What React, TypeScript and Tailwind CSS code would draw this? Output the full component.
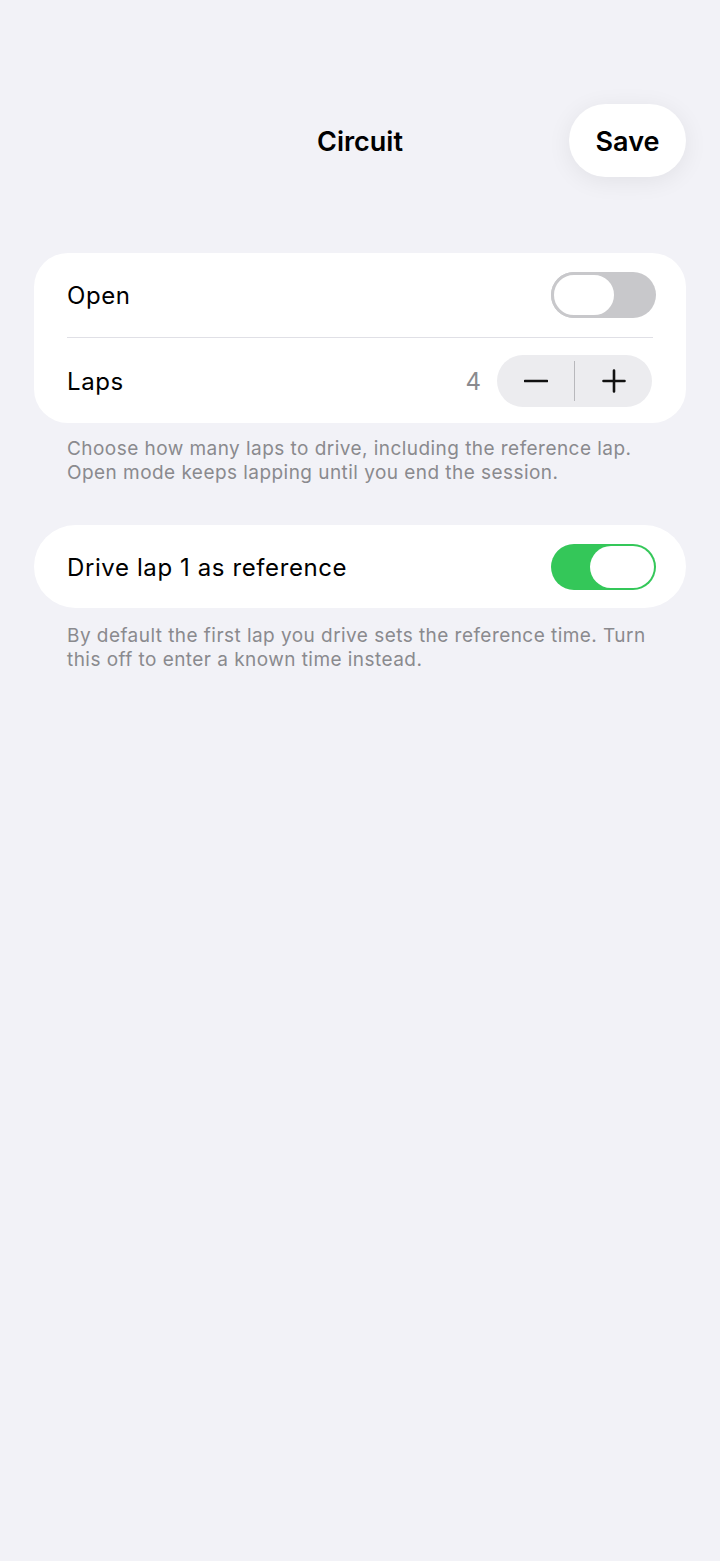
import React from "react";

function Toggle({ on }: { on: boolean }) {
  return on ? (
    <div className="w-[105px] h-[46px] rounded-full bg-[#34c759] flex items-center justify-end p-[2px]">
      <div className="w-[64px] h-[42px] rounded-full bg-white" />
    </div>
  ) : (
    <div className="w-[105px] h-[46px] rounded-full bg-[#c8c8cb] flex items-center justify-start">
      <div className="w-[66px] h-[46px] rounded-full bg-white border-[3px] border-[#c8c8cb]" />
    </div>
  );
}

export default function App() {
  return (
    <div
      className="min-h-[1561px] w-full bg-[#f2f2f7] text-black"
      style={{ fontFamily: "Inter, 'Noto Sans', sans-serif" }}
    >
      <div className="grid grid-cols-[1fr_auto_1fr] items-center pt-[104px] px-[34px]">
        <div />
        <div className="text-[27px] font-semibold tracking-[0px] pt-[3px]">Circuit</div>
        <div className="justify-self-end">
          <div className="w-[117px] h-[73px] rounded-full bg-white flex items-center justify-center text-[27px] font-semibold pt-[3px] shadow-[0_4px_24px_rgba(0,0,0,0.07)]">
            Save
          </div>
        </div>
      </div>

      <div className="px-[34px] mt-[76px]">
        <div className="bg-white rounded-[34px] pl-[33px] pr-[30px]">
          <div className="h-[84px] flex items-center justify-between">
            <span className="text-[24px] tracking-[0.6px] pt-[2px]">Open</span>
            <Toggle on={false} />
          </div>
          <div className="h-px bg-[#e0e0e6] mr-[3px]" />
          <div className="h-[85px] flex items-center justify-between pr-[4px]">
            <span className="text-[24px] tracking-[0.6px] pt-[2px]">Laps</span>
            <div className="flex items-center gap-[16px]">
              <span className="text-[24px] text-[#8a8a8e] pt-[2px]">4</span>
              <div className="w-[155px] h-[52px] rounded-full bg-[#ececef] flex items-center">
                <div className="flex-1 flex items-center justify-center">
                  <svg width="24" height="24" viewBox="0 0 24 24">
                    <path d="M1 12h22" stroke="#111" strokeWidth="2.6" strokeLinecap="round" />
                  </svg>
                </div>
                <div className="w-px h-[40px] bg-[#b8b8bc]" />
                <div className="flex-1 flex items-center justify-center">
                  <svg width="24" height="24" viewBox="0 0 24 24">
                    <path d="M1.5 12h21M12 1.5v21" stroke="#111" strokeWidth="2.6" strokeLinecap="round" />
                  </svg>
                </div>
              </div>
            </div>
          </div>
        </div>
        <p className="pl-[33px] pr-[20px] pt-[14px] text-[19px] leading-[24px] tracking-[0.45px] text-[#8a8a8e]">
          Choose how many laps to drive, including the reference lap. Open mode keeps lapping until you end the session.
        </p>

        <div className="bg-white rounded-[42px] pl-[33px] pr-[30px] h-[83px] mt-[40px] flex items-center justify-between">
          <span className="text-[24px] tracking-[0.6px] pt-[2px]">Drive lap 1 as reference</span>
          <Toggle on={true} />
        </div>
        <p className="pl-[33px] pr-[20px] pt-[16px] text-[19px] leading-[24px] tracking-[0.45px] text-[#8a8a8e]">
          By default the first lap you drive sets the reference time. Turn this off to enter a known time instead.
        </p>
      </div>
    </div>
  );
}
